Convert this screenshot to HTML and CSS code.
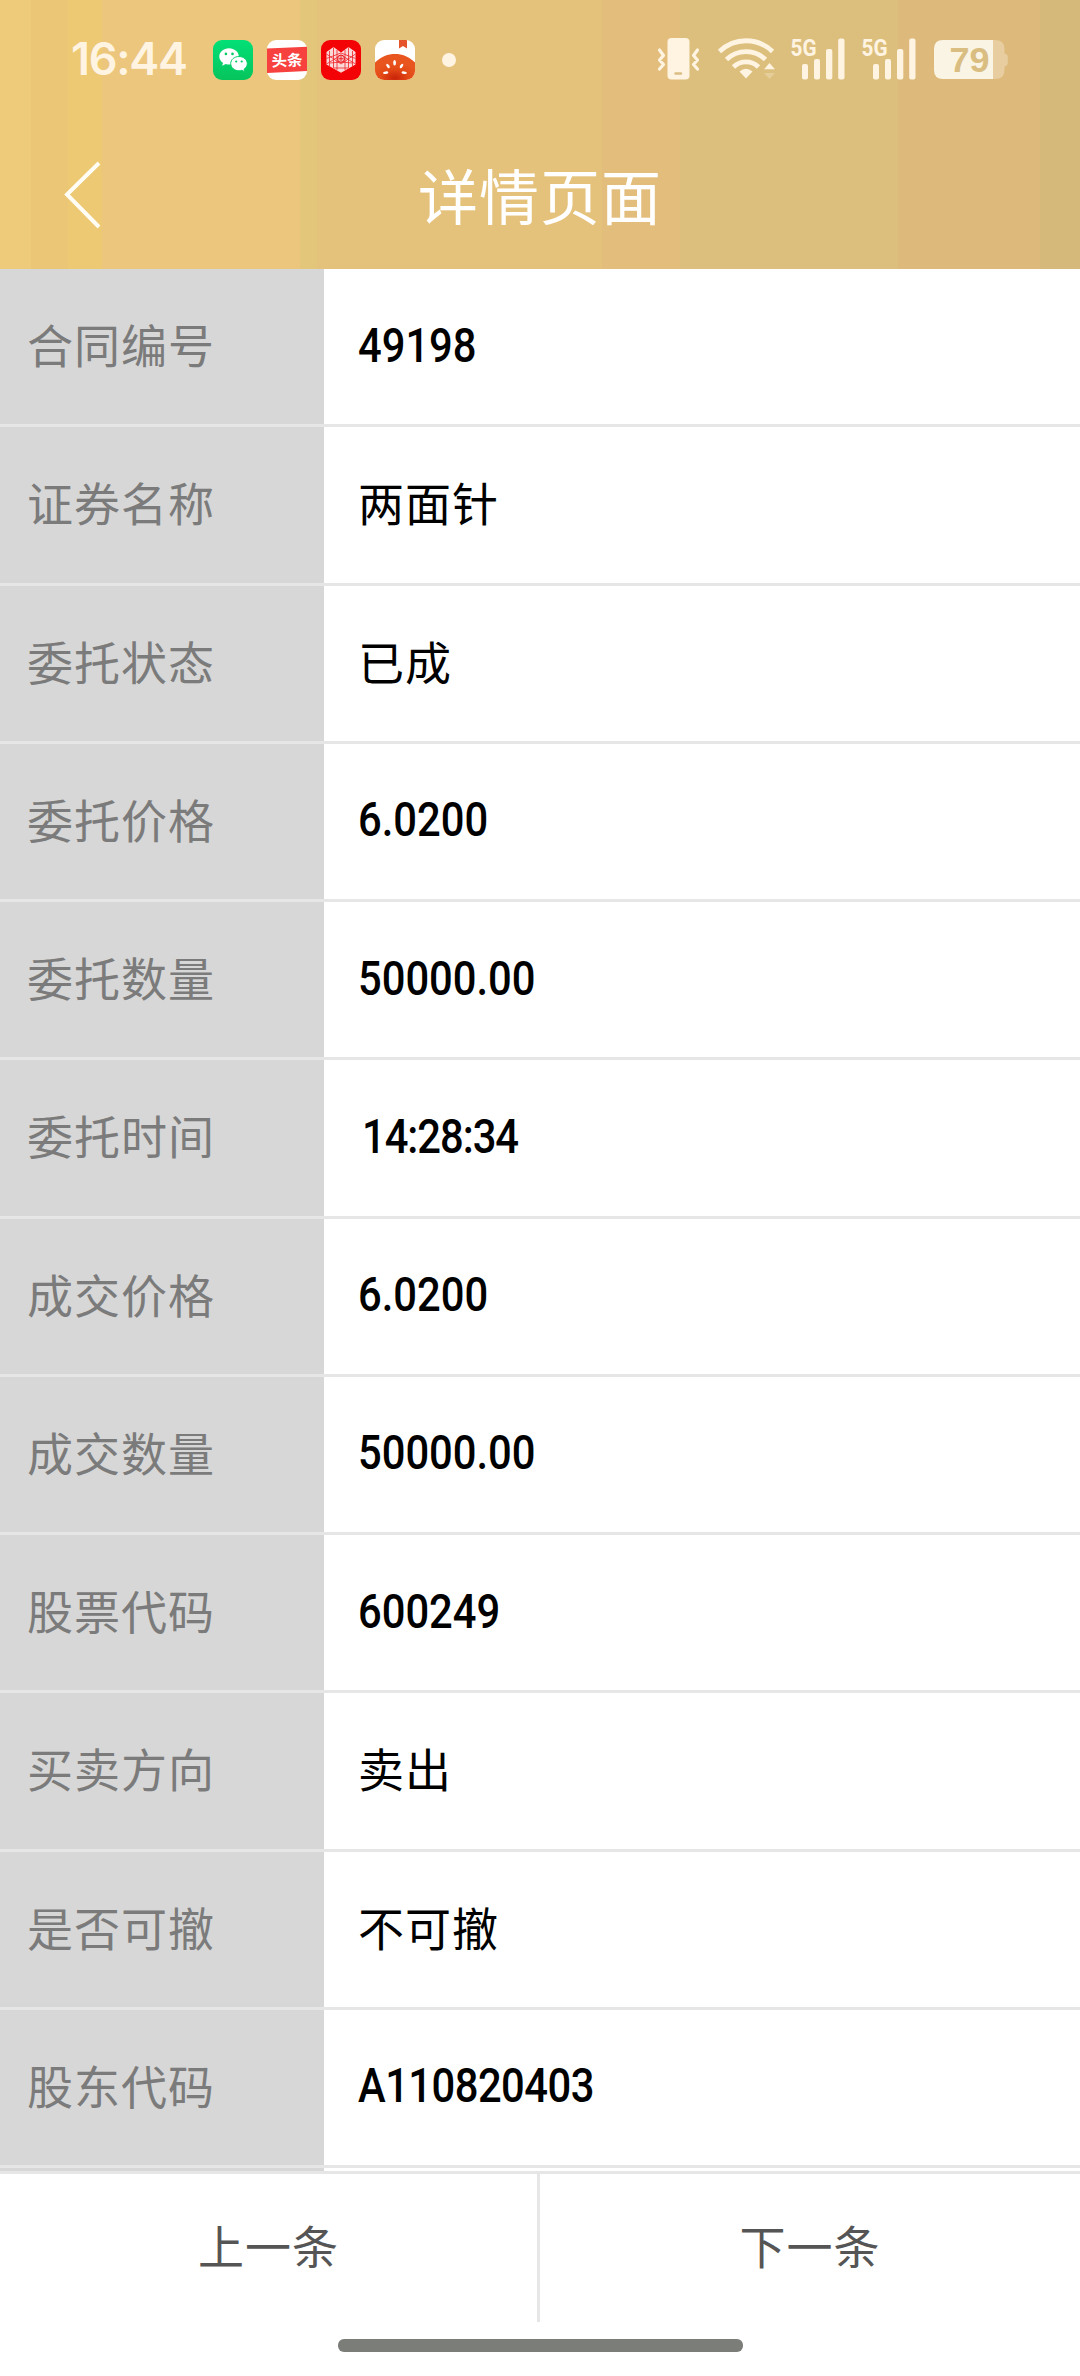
FILE: index.html
```html
<!DOCTYPE html>
<html lang="zh-CN">
<head>
<meta charset="utf-8">
<title>详情页面</title>
<link rel="stylesheet" href="styles.css">
</head>
<body>
<div class="screen">
  <header class="header">
    <div class="status">
      <span class="clock">16:44</span>
      <div class="apps">
        <svg class="app" viewBox="0 0 40 40"><defs><linearGradient id="wx" x2="0" y2="1"><stop stop-color="#02e077"/><stop offset="1" stop-color="#06c45c"/></linearGradient></defs><rect width="40" height="40" rx="9" fill="url(#wx)"/><path d="M16 8.200c-5.500 0-9.700 3.700-9.700 8.200 0 2.600 1.400 4.900 3.700 6.400l-.8 2.900 3.500-1.800c1.200.4 2.500.5 3.800.5 5.300-.1 9.300-3.700 9.300-8.100S21.500 8.200 16 8.200z" fill="#fff"/><path d="M26 16.500c-4.700 0-8.300 3.200-8.300 7.100s3.600 7.200 8.300 7.200c1 0 2-.2 2.900-.5l2.800 1.500-.7-2.500c2.100-1.300 3.300-3.400 3.300-5.700 0-3.900-3.600-7.100-8.300-7.100z" fill="#fff" stroke="#04d068" stroke-width="1"/><g fill="#05cb65"><circle cx="12.900" cy="13.900" r="1.300"/><circle cx="19.500" cy="13.900" r="1.300"/><circle cx="23.200" cy="21.500" r="1.100"/><circle cx="28.700" cy="21.500" r="1.100"/></g></svg>
        <svg class="app" viewBox="0 0 40 40"><rect width="40" height="40" rx="9" fill="#fff"/><path d="M0 8.500L40 6.800V31L0 33z" fill="#f7413f"/><text class="toutiao" x="20" y="26" text-anchor="middle" transform="rotate(-2 20 20)">头条</text></svg>
        <svg class="app" viewBox="0 0 40 40"><rect width="40" height="40" rx="9" fill="#f30305"/><path d="M5.500 12L12.500 7 20 12.500 27.500 7l7 5v12.500L20 32.800 5.500 24.500z" fill="#fbd9d9"/><path d="M5.500 18.500L20 13l14.500 5.500M12.500 7.500V28M27.500 7.500V28M8.500 11v15M16 10v20M24 10v20M31.500 11v15M5.500 14L20 24l14.500-10M5.500 24L20 15l14.500 9M9 23l11-1 11 1M13 28h14" fill="none" stroke="#ee2328" stroke-width=".8"/><circle cx="20" cy="18.700" r="3.600" fill="#f8b9b9" stroke="#e90c12"/><path d="M17.500 18.700h5M20 16.200v5" stroke="#e90c12" stroke-width=".8"/></svg>
        <svg class="app" viewBox="0 0 40 40"><defs><clipPath id="tile"><rect width="40" height="40" rx="9"/></clipPath><radialGradient id="tom" cx=".5" cy=".92" r=".6"><stop stop-color="#c9230a"/><stop offset=".55" stop-color="#e34815"/><stop offset="1" stop-color="#e9551f"/></radialGradient></defs><g clip-path="url(#tile)"><rect width="40" height="40" fill="#fff"/><path d="M0 22.500C6 16.500 13 14 20 14s14 2.500 20 8.500V40H0z" fill="url(#tom)"/><path d="M24 0h8v8.600L28 6l-4 2.600z" fill="#e6542b"/><g fill="#fff"><ellipse cx="19.600" cy="22.800" rx="1.400" ry="2.800"/><ellipse cx="13" cy="26" rx="1.300" ry="2.500" transform="rotate(-35 13 26)"/><ellipse cx="26.500" cy="26" rx="1.300" ry="2.500" transform="rotate(35 26.500 26)"/><ellipse cx="10.700" cy="32.700" rx="2.700" ry="1.300" transform="rotate(-5 10.700 32.700)"/><ellipse cx="29.200" cy="32.700" rx="2.700" ry="1.300" transform="rotate(5 29.200 32.700)"/></g></g></svg>
      </div>
      <span class="dot"></span>
      <svg class="indicators" width="354" height="56" viewBox="656 30 354 56" fill="#fff3e2">
        <rect x="667.500" y="38" width="22" height="41.500" rx="4"/><path d="M675.500 73.500h5.500" stroke="#dcbd83" stroke-width="2.400" stroke-linecap="round"/>
        <path d="M659.500 50l4 5.500-4 4.500 4 4.500-4 4.500M697.500 50l-4 5.500 4 4.500-4 4.500 4 4.500" fill="none" stroke="#fff3e2" stroke-width="3.200" stroke-linecap="round" stroke-linejoin="round"/>
        <g fill="none" stroke="#fff3e2" stroke-width="4.800"><path d="M719.500 51.500a38 38 0 0 1 53 0"/><path d="M726.500 59.500a28 28 0 0 1 39 0"/><path d="M733.500 67a18 18 0 0 1 25 0"/></g><path d="M739.500 71.500q6.500-5.600 13 0L746 78.500z"/>
        <path d="M769.500 63l5.400 6.200h-10.800z"/><path d="M769.500 79l5.400-6h-10.800z" opacity=".3"/>
        <g><text class="net" x="790.500" y="56" textLength="26" lengthAdjust="spacingAndGlyphs">5G</text><rect x="802" y="64" width="6" height="15.500" rx="2"/><rect x="814" y="59" width="6" height="20.500" rx="2"/><rect x="826" y="49" width="6.300" height="30.500" rx="2"/><rect x="838.200" y="38.500" width="6.300" height="41" rx="2"/></g>
        <g transform="translate(71 0)"><text class="net" x="790.500" y="56" textLength="26" lengthAdjust="spacingAndGlyphs">5G</text><rect x="802" y="64" width="6" height="15.500" rx="2"/><rect x="814" y="59" width="6" height="20.500" rx="2"/><rect x="826" y="49" width="6.300" height="30.500" rx="2"/><rect x="838.200" y="38.500" width="6.300" height="41" rx="2"/></g>
        <path d="M993 40h2q9.500 0 9.500 9v4.500q3.300.5 3.300 3.500v5.500q0 3.500-3.300 4V70q0 9-9.500 9h-2z" fill="#e7cda0"/><path d="M993 40h-50q-9 0-9 9v21q0 9 9 9h50z" fill="#faf4e4"/><text class="battery" x="949.500" y="71.700" textLength="40" lengthAdjust="spacingAndGlyphs">79</text>
      </svg>
    </div>
    <div class="titlebar">
      <svg class="back" width="40" height="72" viewBox="0 0 40 72" fill="none" stroke="#fffdf5" stroke-width="4"><path d="M36 3L4 34.500 36 67"/></svg>
      <h1 class="title">详情页面</h1>
    </div>
  </header>
  <main class="rows">
    <div class="row"><span class="label">合同编号</span><span class="value"><b class="num">49198</b></span></div>
    <div class="row"><span class="label">证券名称</span><span class="value">两面针</span></div>
    <div class="row"><span class="label">委托状态</span><span class="value">已成</span></div>
    <div class="row"><span class="label">委托价格</span><span class="value"><b class="num">6.0200</b></span></div>
    <div class="row"><span class="label">委托数量</span><span class="value"><b class="num">50000.00</b></span></div>
    <div class="row"><span class="label">委托时间</span><span class="value"><b class="num time">14:28:34</b></span></div>
    <div class="row"><span class="label">成交价格</span><span class="value"><b class="num">6.0200</b></span></div>
    <div class="row"><span class="label">成交数量</span><span class="value"><b class="num">50000.00</b></span></div>
    <div class="row"><span class="label">股票代码</span><span class="value"><b class="num">600249</b></span></div>
    <div class="row"><span class="label">买卖方向</span><span class="value">卖出</span></div>
    <div class="row"><span class="label">是否可撤</span><span class="value">不可撤</span></div>
    <div class="row"><span class="label">股东代码</span><span class="value"><b class="num account">A110820403</b></span></div>
  </main>
  <div class="peek"></div>
  <footer class="pager">
    <span class="prev">上一条</span><span class="next">下一条</span>
  </footer>
  <div class="home"></div>
</div>
</body>
</html>
```
FILE: styles.css
```css
* { box-sizing: border-box; }
body { margin: 0; background: #fff; font-family: "Noto Sans CJK SC", sans-serif; }
.screen { width: 1080px; height: 2376px; display: flex; flex-direction: column; overflow: hidden; }

.header {
  height: 269px;
  display: flex;
  flex-direction: column;
  background: linear-gradient(90deg,
    #edcb7a 0 31px, #ecc677 31px 68px, #ecc972 68px 102px, #ebc67c 102px 300px,
    #e3c67a 300px 317px, #e5c27b 317px 602px, #e2bd7b 602px 680px,
    #dcbf7c 680px 898px, #ddba7b 898px 1040px, #d4b97a 1040px);
}
.status { height: 120px; display: flex; align-items: center; padding-left: 71px; }
.clock { width: 142px; font: 600 45px/54px Inter, sans-serif; letter-spacing: -1.300px; color: #fff3e2; margin-top: -2px; }
.apps { display: flex; gap: 14px; }
.app { width: 40px; height: 40px; display: block; }
.toutiao { font: 700 15.500px "Noto Sans CJK SC", sans-serif; fill: #fff; }
.dot { width: 14px; height: 14px; border-radius: 7px; background: #fff3e2; margin-left: 27px; }
.indicators { margin-left: 200px; margin-top: -4px; display: block; overflow: visible; }
.net { font: 700 24.500px Roboto, sans-serif; }
.battery { font: 700 35px "Liberation Sans", sans-serif; fill: #d9bd81; }

.titlebar { flex: 1; display: grid; grid-template-columns: 104px 1fr 104px; align-items: start; padding-top: 34px; }
.back { margin: 6px 0 0 63px; display: block; }
.title { margin: 0; text-align: center; font-size: 60px; font-weight: 400; line-height: 80px; letter-spacing: 1px; color: #fff; }

.rows { height: 1899px; display: grid; grid-template-rows: repeat(12, 1fr); }
.row { display: grid; grid-template-columns: 324px 1fr; border-bottom: 3px solid #e6e6e6; font-size: 46px; letter-spacing: 1px; }
.label { display: flex; align-items: center; padding: 0 0 7px 27px; background: #d7d7d7; color: #7b7b7b; }
.value { display: flex; align-items: center; padding: 0 0 7px 34px; color: #000; }
.num { font: 500 48.500px/60px Roboto, sans-serif; letter-spacing: 0; margin-top: 5px; transform: scaleX(.86); transform-origin: left; }
.time { letter-spacing: -1.200px; margin-left: 4px; }
.account { letter-spacing: -.6px; }
.peek { height: 3px; background: linear-gradient(90deg, #d7d7d7 324px, #fff 324px); }

.pager { height: 151px; border-top: 3px solid #e6e6e6; display: grid; grid-template-columns: 540px 540px; font-size: 46px; letter-spacing: 1px; color: #555; text-align: center; line-height: 141px; }
.prev { border-right: 3px solid #e6e6e6; }
.home { width: 405px; height: 13px; margin: 17px auto 0; border-radius: 6px; background: #7b7d79; }
```
